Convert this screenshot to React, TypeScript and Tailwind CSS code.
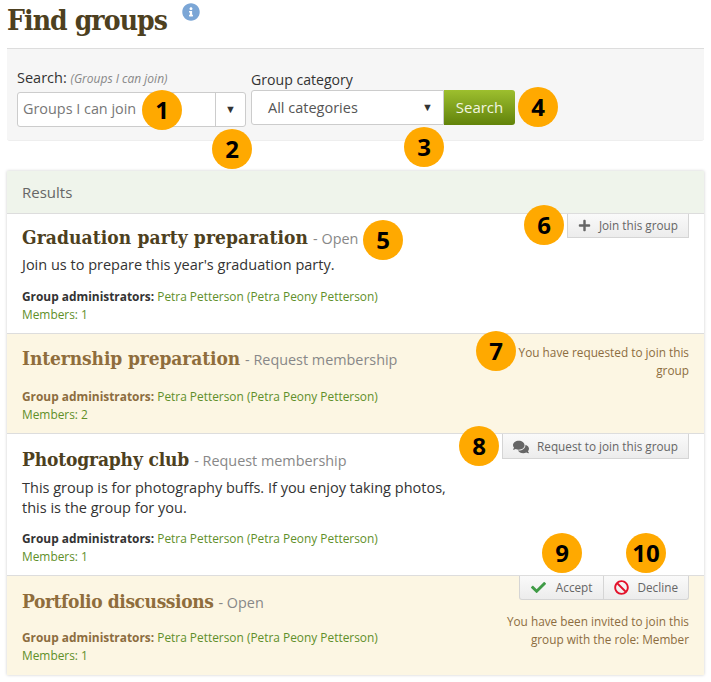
import { FaBan, FaCheck, FaComments, FaInfoCircle, FaPlus } from 'react-icons/fa'

const rowTitle = "font-['DejaVu_Serif_Condensed','DejaVu_Serif',serif] font-bold text-[19px] leading-[28px]"

function Badge({ n, className }: { n: number; className: string }) {
  return (
    <div
      className={`absolute flex h-10 w-10 items-center justify-center rounded-full bg-[#ffa900] text-[24px] font-bold leading-none text-black ${className}`}
    >
      {n}
    </div>
  )
}

function Admins({ members }: { members: number }) {
  return (
    <div className="text-[11.9px] leading-[18px]">
      <div>
        <span className="font-bold">Group administrators:</span>{' '}
        <span className="text-[#5f8f2a]">Petra Petterson (Petra Peony Petterson)</span>
      </div>
      <div className="text-[#5f8f2a]">Members: {members}</div>
    </div>
  )
}

const buttonClass =
  'flex items-center border border-t-0 border-[#d5d5d5] bg-gradient-to-b from-[#fafafa] to-[#ececec] text-[11.75px] text-[#666]'

export default function App() {
  return (
    <div className="relative h-[682px] w-[711px] overflow-hidden bg-white font-['Open_Sans',sans-serif] text-[#333]">
      {/* Title */}
      <div className="flex h-12 items-start pl-[7px]">
        <h1 className="font-['DejaVu_Serif_Condensed','DejaVu_Serif',serif] text-[28px] font-bold leading-[42px] tracking-[-0.9px] text-[#4d4020]">
          Find groups
        </h1>
        <FaInfoCircle className="ml-[15px] mt-[3px] h-[18px] w-[18px] text-[#7ba6d6]" />
      </div>

      {/* Search form */}
      <div className="mx-[7px] flex h-[93px] gap-[5px] rounded-b-[3px] border-t border-b border-t-[#ddd] border-b-[#eee] bg-[#f6f6f6] pl-[10px] pt-[21px]">
        <div>
          <div className="h-[22px] text-[14.5px] leading-[16px]">
            Search: <span className="text-[12px] italic text-[#888]">(Groups I can join)</span>
          </div>
          <div className="flex h-[35px] w-[229px] rounded-[3px] border border-[#ccc] bg-white text-[14.4px] text-[#777]">
            <div className="flex flex-1 items-center border-r border-[#ccc] pb-[2px] pl-[5px]">Groups I can join</div>
            <div className="flex w-[29px] items-center justify-center text-[11px] text-[#333]">▼</div>
          </div>
        </div>
        <div className="-mt-[1px]">
          <div className="h-[21px] text-[14.1px] leading-[21px]">Group category</div>
          <div className="flex h-[35px]">
            <div className="flex w-[193px] items-center justify-between rounded-l-[3px] border border-[#ccc] bg-white pl-[16px] pr-[10px] text-[14.5px] text-[#555]">
              All categories
              <span className="text-[11px] text-[#333]">▼</span>
            </div>
            <div className="flex w-[71px] items-center justify-center rounded-r-[3px] bg-gradient-to-b from-[#9dbf2e] to-[#628309] text-[15px] text-[#f2f5e0]">
              Search
            </div>
          </div>
        </div>
      </div>

      {/* Results */}
      <div className="mx-[7px] mt-[30px] h-[504px] shadow-[0_0_3px_rgba(0,0,0,0.2)]">
        <div className="flex h-[43px] items-center border-b border-[#ddd] bg-[#eff4eb] pl-[15px] text-[15px] text-[#666]">
          Results
        </div>

        <div className="flex h-[120px] justify-between border-b border-[#ddd] bg-white px-[15px]">
          <div className="pt-[9px]">
            <div className="flex items-baseline">
              <span className={`${rowTitle} tracking-[0.1px] text-[#4d4020]`}>Graduation party preparation</span>
              <span className="ml-[5px] text-[14.4px] text-[#888]">- Open</span>
            </div>
            <p className="mt-[4px] text-[14.5px] leading-[20px]">Join us to prepare this year's graduation party.</p>
            <div className="mt-[12px]"><Admins members={1} /></div>
          </div>
          <div className={`${buttonClass} h-6 self-start px-[10px]`}>
            <FaPlus className="mr-[8px] h-[13px] w-[13px] text-[#666]" />
            Join this group
          </div>
        </div>

        <div className="flex h-[100px] justify-between border-b border-[#ddd] bg-[#fcf6e3] px-[15px] text-[#8c6d3f]">
          <div className="pt-[10px]">
            <div className="flex items-baseline">
              <span className={`${rowTitle} tracking-[-0.1px] text-[#8f6d3c]`}>Internship preparation</span>
              <span className="ml-[5px] text-[14.4px] text-[#888]">- Request membership</span>
            </div>
            <div className="mt-[15px]"><Admins members={2} /></div>
          </div>
          <div className="w-[180px] pt-[9px] text-right text-[11.8px] leading-[18px]">
            You have requested to join this group
          </div>
        </div>

        <div className="flex h-[142px] justify-between border-b border-[#ddd] bg-white px-[15px]">
          <div className="w-[430px] pt-[11px]">
            <div className="flex items-baseline">
              <span className={`${rowTitle} tracking-[-0.15px] text-[#4d4020]`}>Photography club</span>
              <span className="ml-[5px] text-[14.4px] text-[#888]">- Request membership</span>
            </div>
            <p className="mt-[5px] text-[14.5px] leading-[20px]">
              This group is for photography buffs. If you enjoy taking photos, this is the group for you.
            </p>
            <div className="mt-[11px]"><Admins members={1} /></div>
          </div>
          <div className={`${buttonClass} h-[25px] self-start px-[10px] pt-[1px]`}>
            <FaComments className="mr-[8px] h-[16px] w-[16px] text-[#666]" />
            Request to join this group
          </div>
        </div>

        <div className="flex h-[99px] justify-between bg-[#fcf6e3] px-[15px] text-[#8c6d3f]">
          <div className="pt-[11px]">
            <div className="flex items-baseline">
              <span className={`${rowTitle} tracking-[-0.4px] text-[#8f6d3c]`}>Portfolio discussions</span>
              <span className="ml-[5px] text-[14.4px] text-[#888]">- Open</span>
            </div>
            <div className="mt-[13px]"><Admins members={1} /></div>
          </div>
          <div className="flex w-[200px] flex-col items-end">
            <div className="flex">
              <div className={`${buttonClass} h-6 rounded-bl-[3px] pl-[11px] pr-[10px]`}>
                <FaCheck className="mr-[10px] h-[15px] w-[15px] text-[#3f9b46]" />
                Accept
              </div>
              <div className={`${buttonClass} -ml-px h-6 rounded-br-[3px] pl-[10px] pr-[10px]`}>
                <FaBan className="mr-[9px] h-[15px] w-[15px] text-[#e3122b]" />
                Decline
              </div>
            </div>
            <div className="mt-[12px] text-right text-[11.8px] leading-[18px]">
              You have been invited to join this group with the role: Member
            </div>
          </div>
        </div>
      </div>

      {/* Callouts */}
      <Badge n={1} className="left-[142px] top-[90px]" />
      <Badge n={2} className="left-[212px] top-[129px]" />
      <Badge n={3} className="left-[404px] top-[127px]" />
      <Badge n={4} className="left-[518px] top-[87px]" />
      <Badge n={5} className="left-[363px] top-[220px]" />
      <Badge n={6} className="left-[524px] top-[205px]" />
      <Badge n={7} className="left-[476px] top-[331px]" />
      <Badge n={8} className="left-[459px] top-[426px]" />
      <Badge n={9} className="left-[542px] top-[533px]" />
      <Badge n={10} className="left-[626px] top-[533px]" />
    </div>
  )
}
